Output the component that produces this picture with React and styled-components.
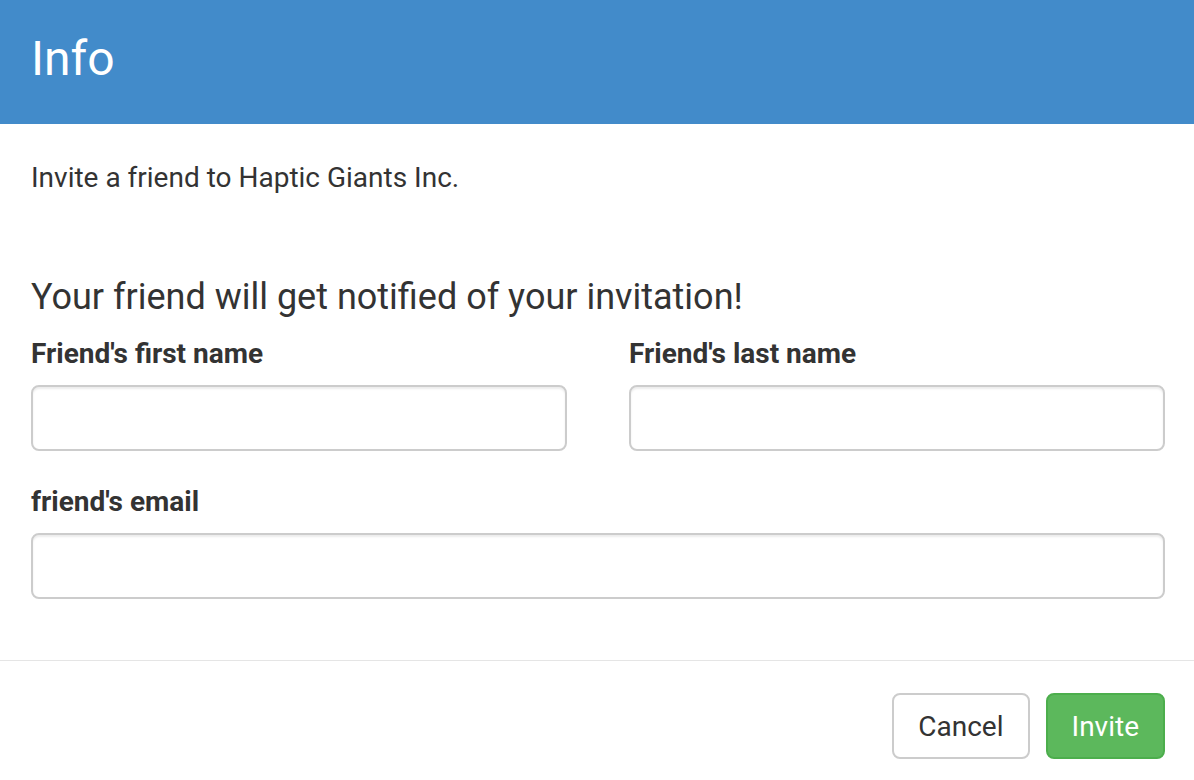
import React from 'react';
import styled, { createGlobalStyle } from 'styled-components';

const GlobalStyle = createGlobalStyle`
  html, body {
    margin: 0;
    padding: 0;
    background: #fff;
  }
  body {
    font-family: Roboto, 'Liberation Sans', sans-serif;
    color: #333;
  }
`;

const Modal = styled.div`
  width: 1194px;
  height: 780px;
  overflow: hidden;
  background: #fff;
`;

const Header = styled.div`
  height: 124px;
  background: #428bca;
  display: flex;
  align-items: center;
  padding: 0 31px;
  box-sizing: border-box;
`;

const Title = styled.h4`
  margin: 0 0 6px;
  color: #fff;
  font-weight: 400;
  font-size: 48px;
  line-height: 1;
`;

const Body = styled.div`
  padding: 34px 29px 61px 31px;
`;

const Intro = styled.p`
  margin: 0;
  font-size: 28px;
  line-height: 40px;
`;

const Heading = styled.h3`
  margin: 79px 0 20px;
  font-size: 36px;
  font-weight: 400;
  line-height: 40px;
`;

const Row = styled.div`
  display: grid;
  grid-template-columns: 1fr 1fr;
  column-gap: 62px;
`;

const Field = styled.div`
  display: flex;
  flex-direction: column;
  margin-bottom: ${p => (p.last ? '0' : '34px')};
`;

const Label = styled.label`
  font-size: 28px;
  font-weight: 700;
  line-height: 34px;
  margin-bottom: 14px;
`;

const Input = styled.input`
  height: 66px;
  box-sizing: border-box;
  border: 2px solid #ccc;
  border-radius: 8px;
  box-shadow: inset 0 2px 2px rgba(0, 0, 0, 0.075);
  font: inherit;
  font-size: 28px;
  padding: 0 24px;
  outline: none;
`;

const Footer = styled.div`
  border-top: 1px solid #e5e5e5;
  display: flex;
  justify-content: flex-end;
  gap: 16px;
  padding: 32px 29px 0 0;
`;

const Button = styled.button`
  height: 66px;
  box-sizing: border-box;
  padding: 0 24px;
  border-radius: 8px;
  border: 2px solid ${p => (p.primary ? '#4cae4c' : '#ccc')};
  background: ${p => (p.primary ? '#5cb85c' : '#fff')};
  color: ${p => (p.primary ? '#fff' : '#333')};
  font-family: Roboto, 'Liberation Sans', sans-serif;
  font-size: 28px;
  cursor: pointer;
`;

export default function App() {
  return (
    <Modal>
      <GlobalStyle />
      <Header>
        <Title>Info</Title>
      </Header>
      <Body>
        <Intro>Invite a friend to Haptic Giants Inc.</Intro>
        <Heading>Your friend will get notified of your invitation!</Heading>
        <Row>
          <Field>
            <Label>Friend's first name</Label>
            <Input type="text" />
          </Field>
          <Field>
            <Label>Friend's last name</Label>
            <Input type="text" />
          </Field>
        </Row>
        <Field last>
          <Label>friend's email</Label>
          <Input type="email" />
        </Field>
      </Body>
      <Footer>
        <Button>Cancel</Button>
        <Button primary>Invite</Button>
      </Footer>
    </Modal>
  );
}
